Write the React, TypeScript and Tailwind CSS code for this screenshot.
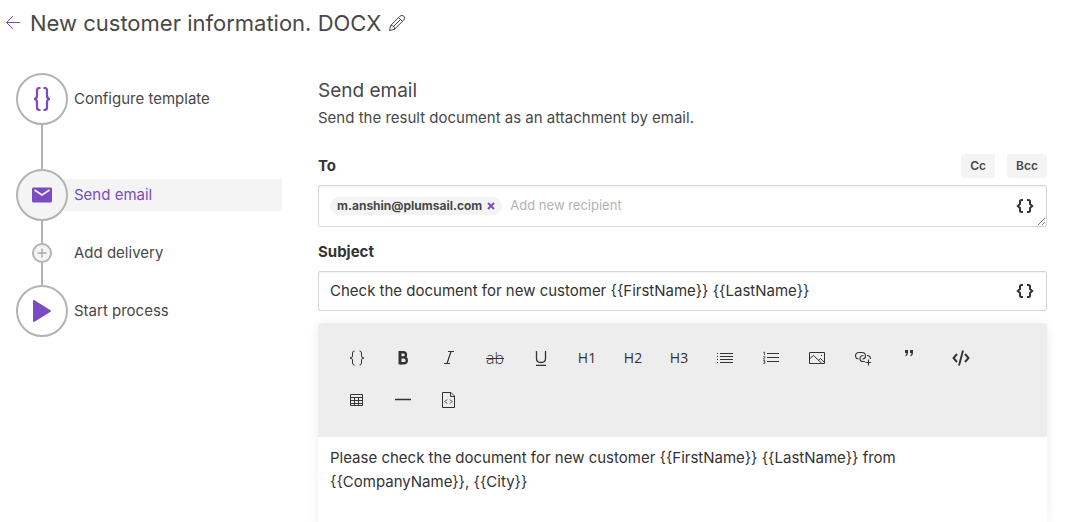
import React, { useState } from 'react';
import clsx from 'clsx';

type IconProps = { className?: string };

const ArrowLeftIcon = ({ className }: IconProps) => (
  <svg className={className} viewBox="0 0 16 16" fill="none" stroke="currentColor">
    <path d="M15 7.500H1.500M8 1 1.500 7.500 8 14" />
  </svg>
);

const PencilIcon = ({ className }: IconProps) => (
  <svg className={className} viewBox="0 0 18 18" fill="none" stroke="currentColor">
    <path d="M1.500 16.500 2.600 11.600 12 2.200a2.600 2.600 0 0 1 3.800 3.800L6.400 15.400ZM2.600 11.600a3 3 0 0 1 3.800 3.800M10.600 3.600l3.800 3.800M4.700 13.300l7.800-7.800" />
  </svg>
);

const BracesIcon = ({ className }: IconProps) => (
  <svg className={className} viewBox="0 0 18 24" fill="none" stroke="currentColor" strokeWidth="2.200">
    <path d="M7.500 1H6.500Q4 1 4 3.500V8.500Q4 12 1 12Q4 12 4 15.500V20.500Q4 23 6.500 23H7.500M10.500 1H11.500Q14 1 14 3.500V8.500Q14 12 17 12Q14 12 14 15.500V20.500Q14 23 11.500 23H10.500" />
  </svg>
);

const MailIcon = ({ className }: IconProps) => (
  <svg className={className} viewBox="0 0 20 16">
    <rect width="20" height="15" y=".5" rx="1.500" fill="currentColor" />
    <path d="m2.500 3 7.500 5 7.500-5" fill="none" stroke="#f4f4f4" strokeWidth="1.600" />
  </svg>
);

const PlayIcon = ({ className }: IconProps) => (
  <svg className={className} viewBox="0 0 20 24" fill="currentColor" stroke="currentColor" strokeWidth="2" strokeLinejoin="round">
    <path d="M2 2v20l16-10Z" />
  </svg>
);

const PlusIcon = ({ className }: IconProps) => (
  <svg className={className} viewBox="0 0 10 10" fill="none" stroke="currentColor" strokeWidth="1.400">
    <path d="M5 .5v9M.5 5h9" />
  </svg>
);

const TokenIcon = ({ className }: IconProps) => (
  <svg className={className} viewBox="0 0 18 14" fill="none" stroke="currentColor" strokeWidth="2">
    <path d="M7 1H5.500Q4 1 4 2.500V5L1.800 7 4 9V11.500Q4 13 5.500 13H7M11 1H12.500Q14 1 14 2.500V5L16.200 7 14 9V11.500Q14 13 12.500 13H11" />
  </svg>
);

const svgProps = {
  className: 'size-4',
  viewBox: '0 0 16 16',
  fill: 'none',
  stroke: 'currentColor',
};

const tools: { label: string; wide?: boolean; icon: React.ReactNode }[] = [
  {
    label: 'Insert token',
    icon: (
      <svg {...svgProps}>
        <path d="M5.500 1Q3.500 1 3.500 3V6Q3.500 8 1 8Q3.500 8 3.500 10V13Q3.500 15 5.500 15M10.500 1Q12.500 1 12.500 3V6Q12.500 8 15 8Q12.500 8 12.500 10V13Q12.500 15 10.500 15" />
      </svg>
    ),
  },
  {
    label: 'Bold',
    icon: (
      <svg {...svgProps} strokeWidth="2.400">
        <path d="M5 2.200H8.200Q11 2.200 11 4.800T8.200 7.400H5M5 7.400H8.500Q11.800 7.400 11.800 10.400T8.500 13.200H5" />
        <path strokeWidth="3" d="M5 1V14.400" />
      </svg>
    ),
  },
  {
    label: 'Italic',
    icon: (
      <svg {...svgProps} strokeWidth="1.200">
        <path d="M7 1.500h6M3 13.500h6M10 1.500 6 13.500" />
      </svg>
    ),
  },
  {
    label: 'Strikethrough',
    icon: <span className="text-base leading-4 font-light line-through">ab</span>,
  },
  {
    label: 'Underline',
    icon: (
      <svg {...svgProps} strokeWidth="1.300">
        <path d="M3.500 1v7.500Q3.500 12.500 8 12.500T12.500 8.500V1M3 15.500h10" />
      </svg>
    ),
  },
  { label: 'Heading 1', icon: 'H1' },
  { label: 'Heading 2', icon: 'H2' },
  { label: 'Heading 3', icon: 'H3' },
  {
    label: 'Bulleted list',
    icon: (
      <svg {...svgProps}>
        <path d="M3 3.500h13M3 6.500h13M3 9.500h13M3 12.500h13M0 3.500h1M0 6.500h1M0 9.500h1M0 12.500h1" />
      </svg>
    ),
  },
  {
    label: 'Numbered list',
    icon: (
      <svg {...svgProps}>
        <path d="M4 3.500h12M4 7.500h12M4 11.500h12" />
        <path strokeWidth=".8" d="M.5 2.500l1-.5v3M.3 6.500h1.500v1L.3 9h1.700M.3 10.500h1.500v3H.3M.5 12h1.300" />
      </svg>
    ),
  },
  {
    label: 'Image',
    icon: (
      <svg {...svgProps}>
        <path d="M.5 2.500h15v11H.5ZM.5 9 4.500 5.500l8 7.500M9.500 10.500l2-2 4 4" />
        <path d="M12 5.500h1" />
      </svg>
    ),
  },
  {
    label: 'Link',
    icon: (
      <svg {...svgProps} strokeWidth="1.100">
        <path d="M3.500 9C1.500 8.700.5 7.500.5 6c0-2 1.500-3.500 3.500-3.500h3c2 0 3.500 1.500 3.500 3.500S9 9 7.500 9" />
        <path d="M8.500 5.500C6.500 5.500 5 7 5 8.700s1.500 2.800 3 2.800h2M12 5.500c2 0 3.500 1.500 3.500 3.500M13.500 9.500v6M10.500 12.500h5.500" />
      </svg>
    ),
  },
  {
    label: 'Quote',
    icon: (
      <svg {...svgProps} fill="currentColor" stroke="none">
        <path d="M4 0h3v3Q7 5.500 4.500 6.500V5Q5.500 4.300 5.500 3H4ZM9 0h3v3Q12 5.500 9.500 6.500V5Q10.500 4.300 10.500 3H9Z" />
      </svg>
    ),
  },
  {
    label: 'Code',
    wide: true,
    icon: (
      <svg className="h-4 w-[18px]" viewBox="0 0 18 16" fill="none" stroke="currentColor" strokeWidth="1.900">
        <path d="M5 4 1.500 8 5 12M13 4l3.500 4-3.500 4M11 .5 7 15.500" />
      </svg>
    ),
  },
  {
    label: 'Table',
    icon: (
      <svg {...svgProps}>
        <path d="M1.500 2.500h12v11h-12ZM1.500 5.500h12M1.500 8.500h12M1.500 11.500h12M5.500 5v8.500M9.500 5v8.500" />
      </svg>
    ),
  },
  {
    label: 'Horizontal rule',
    icon: (
      <svg {...svgProps} strokeWidth="1.500">
        <path d="M0 7.500h16" />
      </svg>
    ),
  },
  {
    label: 'HTML source',
    icon: (
      <svg {...svgProps}>
        <path d="M1.500 .5h8.500L13.500 4v11.500h-12ZM9.500.5V4.500H13.500" />
        <path d="M6 7.500l-2 2 2 2M9 7.500l2 2-2 2" />
      </svg>
    ),
  },
];

type StepProps = {
  label: string;
  icon: React.ReactNode;
  active?: boolean;
  small?: boolean;
};

const Step = ({ label, icon, active, small }: StepProps) => (
  <a
    href="#"
    aria-current={active ? 'step' : undefined}
    className={clsx('flex items-center', active ? 'text-[#7a4bc4]' : 'text-[#484848]')}
  >
    <span className="flex w-[52px] shrink-0 justify-center">
      <span
        className={clsx(
          'flex items-center justify-center rounded-full border-2 border-[#b3b3b3]',
          small ? 'size-5 bg-[#f4f4f4] text-[#a8a8a8]' : 'size-[52px] text-[#7a4bc4]',
          active && 'z-10 bg-[#f4f4f4]',
        )}
      >
        {icon}
      </span>
    </span>
    <span
      className={clsx('-ml-1 flex h-8 flex-1 items-center pl-[10px]', active && 'bg-[#f4f4f4]', small && '-my-1.5')}
    >
      {label}
    </span>
  </a>
);

const App: React.FC = () => {
  const [recipients, setRecipients] = useState(['m.anshin@plumsail.com']);
  const [subject, setSubject] = useState('Check the document for new customer {{FirstName}} {{LastName}}');
  const [body, setBody] = useState(
    'Please check the document for new customer {{FirstName}} {{LastName}} from {{CompanyName}}, {{City}}',
  );

  return (
    <div className="flex min-h-screen flex-col bg-white font-['Inter',sans-serif] text-[15px] text-[#484848]">
      <header className="flex h-[46px] items-center pl-[5px]">
        <a href="#" aria-label="Back" className="text-[#7a4bc4]">
          <ArrowLeftIcon className="size-4" />
        </a>
        <h1 className="ml-[9px] text-[22px]">New customer information. DOCX</h1>
        <button type="button" aria-label="Rename" className="ml-[7px]">
          <PencilIcon className="size-[18px]" />
        </button>
      </header>

      <div className="flex flex-1 gap-9 pr-[27px] pl-4">
        <nav className="flex w-[266px] shrink-0 flex-col pt-[27px]">
          <Step label="Configure template" icon={<BracesIcon className="h-6 w-[18px]" />} />
          <span className="ml-[25px] h-11 w-0.5 bg-[#b3b3b3]" />
          <Step label="Send email" active icon={<MailIcon className="h-4 w-5" />} />
          <span className="ml-[25px] h-[22px] w-0.5 bg-[#b3b3b3]" />
          <Step label="Add delivery" small icon={<PlusIcon className="size-[10px]" />} />
          <span className="ml-[25px] h-[22px] w-0.5 bg-[#b3b3b3]" />
          <Step label="Start process" icon={<PlayIcon className="h-6 w-5" />} />
        </nav>

        <main className="flex min-w-0 flex-1 flex-col pt-[33px]">
          <h2 className="text-[19px] leading-6">Send email</h2>
          <p className="mt-[3px] leading-6">Send the result document as an attachment by email.</p>

          <div className="mt-6 flex h-6 items-center gap-3">
            <label htmlFor="to" className="flex-1 font-bold text-[#333]">
              To
            </label>
            <button type="button" className="h-6 rounded-[3px] bg-[#f4f4f4] px-[9px] text-xs font-semibold">
              Cc
            </button>
            <button type="button" className="h-6 rounded-[3px] bg-[#f4f4f4] px-[9px] text-xs font-semibold">
              Bcc
            </button>
          </div>

          <div className="relative mt-[7px] flex h-[42px] items-center rounded-[2px] border border-[#d6d6d6] pr-3 pl-[11px] shadow-[inset_0_1px_2px_rgba(0,0,0,0.06)]">
            {recipients.map(email => (
              <span
                key={email}
                className="mr-2 flex h-[18px] items-center gap-[5px] rounded-full bg-[#f4f4f4] px-[7px] text-xs font-bold"
              >
                {email}
                <button
                  type="button"
                  aria-label={`Remove ${email}`}
                  className="text-[#7a4bc4]"
                  onClick={() => setRecipients(recipients.filter(r => r !== email))}
                >
                  <svg className="size-2" viewBox="0 0 8 8" stroke="currentColor" strokeWidth="2">
                    <path d="m1 1 6 6M7 1 1 7" />
                  </svg>
                </button>
              </span>
            ))}
            <input
              id="to"
              type="text"
              placeholder="Add new recipient"
              className="min-w-0 flex-1 text-[13px] outline-none placeholder:text-[#b3b3b3]"
            />
            <button type="button" aria-label="Insert token in recipients" className="text-[#333]">
              <TokenIcon className="h-[14px] w-[18px]" />
            </button>
            <svg className="absolute right-0 bottom-0 size-[9px]" viewBox="0 0 9 9" stroke="#555" strokeWidth=".8">
              <path d="M1 8 8 1M5 8l3-3" />
            </svg>
          </div>

          <label htmlFor="subject" className="mt-[13px] leading-6 font-bold text-[#333]">
            Subject
          </label>
          <div className="mt-[7px] flex h-10 items-center rounded-[2px] border border-[#d6d6d6] pr-3 pl-[11px] shadow-[inset_0_1px_2px_rgba(0,0,0,0.06)]">
            <input
              id="subject"
              type="text"
              value={subject}
              onChange={e => setSubject(e.target.value)}
              className="min-w-0 flex-1 text-[#333] outline-none"
            />
            <button type="button" aria-label="Insert token in subject" className="text-[#333]">
              <TokenIcon className="h-[14px] w-[18px]" />
            </button>
          </div>

          <section className="mt-3 flex flex-1 flex-col rounded-t-[4px] shadow-[0_2px_12px_rgba(0,0,0,0.08)]">
            <div className="flex flex-wrap rounded-t-[4px] bg-[#ededed] px-4 pt-[14px] pb-4 text-[#333]">
              {tools.map(({ label, wide, icon }) => (
                <button
                  key={label}
                  type="button"
                  aria-label={label}
                  className={clsx(
                    "flex h-[42px] items-center justify-center font-['Open_Sans',sans-serif] text-sm",
                    wide ? 'w-[58px]' : 'w-[46px]',
                  )}
                >
                  {icon}
                </button>
              ))}
            </div>
            <textarea
              aria-label="Message"
              value={body}
              onChange={e => setBody(e.target.value)}
              className="flex-1 resize-none px-3 py-[9px] leading-6 text-[#333] outline-none"
            />
          </section>
        </main>
      </div>
    </div>
  );
};

export default App;
